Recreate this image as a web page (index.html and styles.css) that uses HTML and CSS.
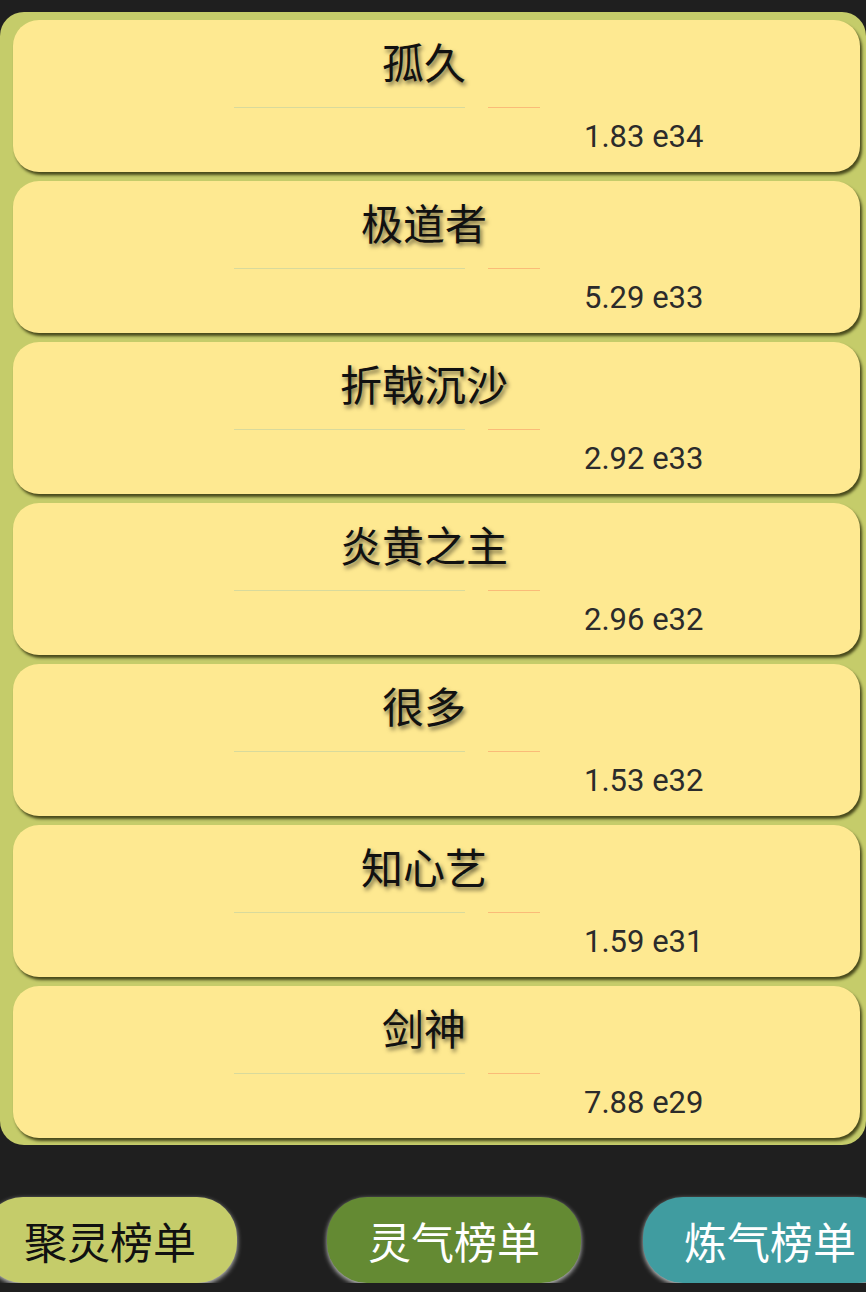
FILE: index.html
```html
<!DOCTYPE html>
<html lang="zh">
<head>
    <meta charset="UTF-8">
    <meta name="viewport" content="width=device-width, initial-scale=1.0">
    <title>灵气榜单</title>
    <link rel="stylesheet" href="styles.css">
</head>
<body>
    <div class="board">
        <div class="rank-item">
            <div class="rank-name">孤久</div>
            <div class="rank-bars"><span class="bar-a"></span><span class="bar-b"></span></div>
            <div class="rank-score">1.83 e34</div>
        </div>
        <div class="rank-item">
            <div class="rank-name">极道者</div>
            <div class="rank-bars"><span class="bar-a"></span><span class="bar-b"></span></div>
            <div class="rank-score">5.29 e33</div>
        </div>
        <div class="rank-item">
            <div class="rank-name">折戟沉沙</div>
            <div class="rank-bars"><span class="bar-a"></span><span class="bar-b"></span></div>
            <div class="rank-score">2.92 e33</div>
        </div>
        <div class="rank-item">
            <div class="rank-name">炎黄之主</div>
            <div class="rank-bars"><span class="bar-a"></span><span class="bar-b"></span></div>
            <div class="rank-score">2.96 e32</div>
        </div>
        <div class="rank-item">
            <div class="rank-name">很多</div>
            <div class="rank-bars"><span class="bar-a"></span><span class="bar-b"></span></div>
            <div class="rank-score">1.53 e32</div>
        </div>
        <div class="rank-item">
            <div class="rank-name">知心艺</div>
            <div class="rank-bars"><span class="bar-a"></span><span class="bar-b"></span></div>
            <div class="rank-score">1.59 e31</div>
        </div>
        <div class="rank-item">
            <div class="rank-name">剑神</div>
            <div class="rank-bars"><span class="bar-a"></span><span class="bar-b"></span></div>
            <div class="rank-score">7.88 e29</div>
        </div>
    </div>

    <div class="tabs">
        <button class="tab tab-gather">聚灵榜单</button>
        <button class="tab tab-aura">灵气榜单</button>
        <button class="tab tab-refine">炼气榜单</button>
    </div>
</body>
</html>
```

FILE: styles.css
```css
body {
    margin: 0;
    padding-top: 12px;
    background-color: #1f1f1f;
    font-family: "Noto Sans CJK SC", "Noto Sans", sans-serif;
    overflow: hidden;
}

.board {
    background-color: #c5cc6a;
    border-radius: 24px;
    padding: 8px 6px 7px 13px;
}

.rank-item {
    height: 152px;
    margin-bottom: 9px;
    background-color: #fee991;
    border-radius: 26px;
    box-shadow: 2px 3px 3px rgba(30, 30, 0, 0.75);
    box-sizing: border-box;
    padding-top: 16px;
}

.rank-item:last-child {
    margin-bottom: 0;
}

.rank-name {
    height: 50px;
    line-height: 50px;
    font-size: 42px;
    text-align: center;
    color: #111;
    padding-right: 25px;
    text-shadow: 2px 3px 4px rgba(0, 0, 0, 0.55);
}

.rank-bars {
    display: flex;
    margin: 21px 0 0 221px;
    height: 1px;
}

.bar-a {
    width: 231px;
    background-color: rgba(170, 200, 170, 0.45);
}

.bar-b {
    width: 52px;
    margin-left: 23px;
    background-color: rgba(245, 150, 100, 0.55);
}

.rank-score {
    margin: 11px 0 0 571px;
    font-family: Roboto, "Liberation Sans", sans-serif;
    font-size: 31px;
    line-height: 36px;
    color: #2b2b2b;
}

.tabs {
    display: flex;
    margin: 52px 0 0 -17px;
}

.tab {
    flex: none;
    width: 254px;
    height: 86px;
    border: none;
    border-radius: 40px;
    font-family: "Noto Sans CJK SC", "Noto Sans", sans-serif;
    font-size: 43px;
    box-shadow: 0 2px 5px rgba(255, 255, 255, 0.75);
    padding: 0;
}

.tab-gather {
    background-color: #c5cc6a;
    color: #111;
}

.tab-aura {
    margin-left: 90px;
    background-color: #648a33;
    color: #fff;
}

.tab-refine {
    margin-left: 62px;
    background-color: #409ca0;
    color: #fff;
}
```
